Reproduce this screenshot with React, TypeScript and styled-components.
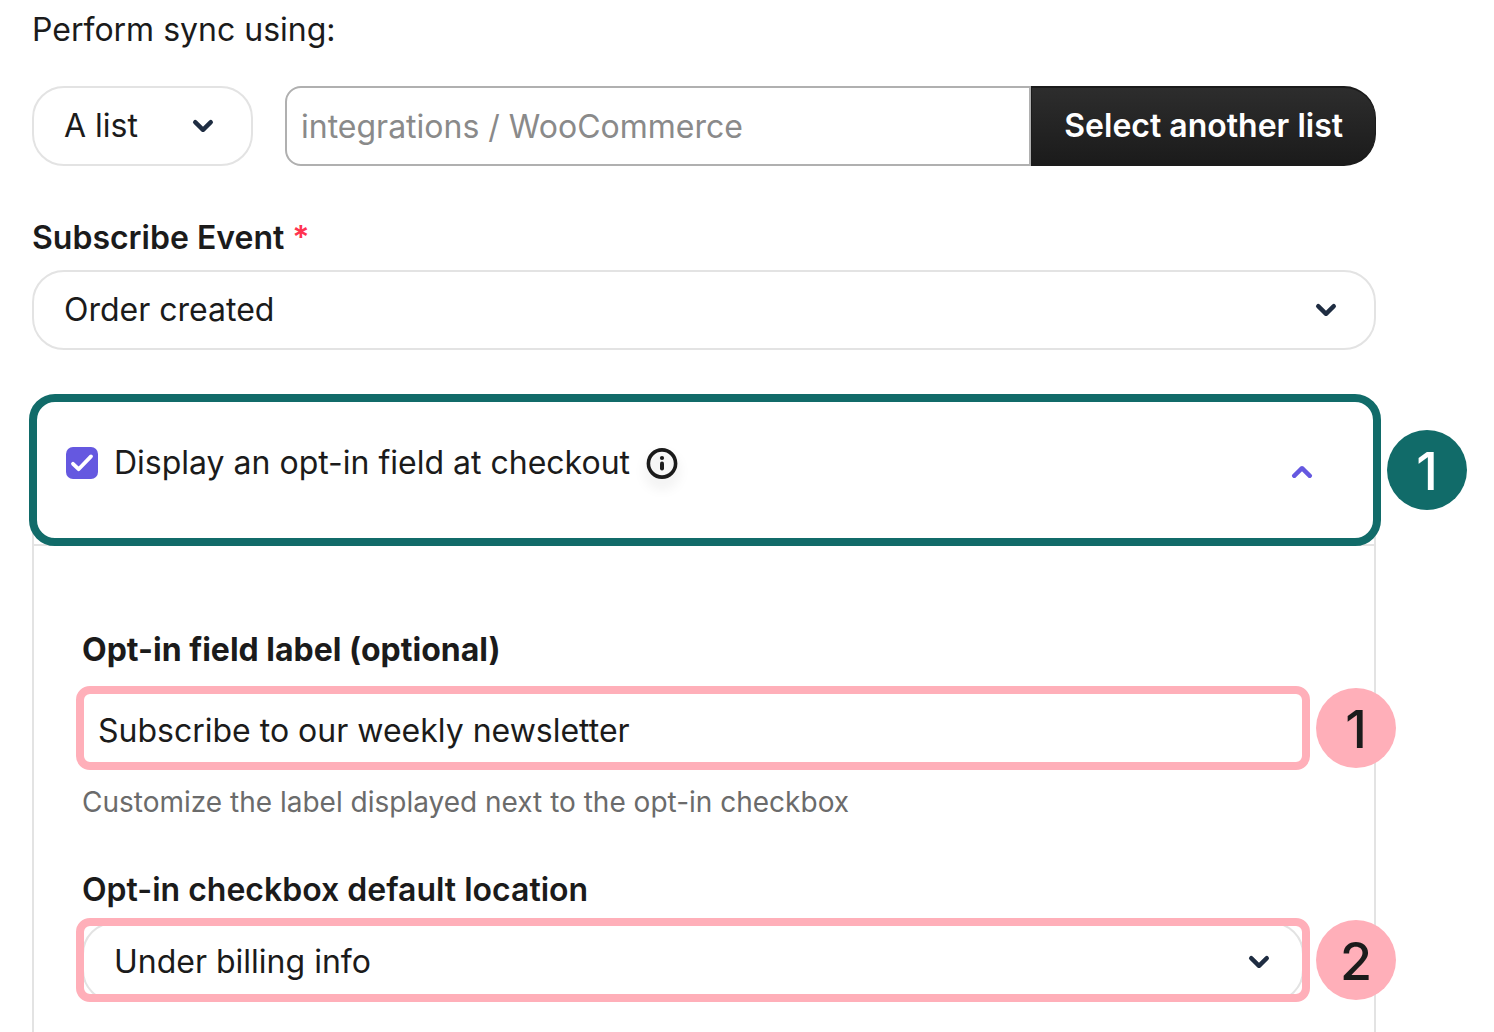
import React from "react";
import styled, { createGlobalStyle } from "styled-components";

const Global = createGlobalStyle`
  *, *::before, *::after { box-sizing: border-box; }
  body { margin: 0; background: #fff; color: #1b1b1b; overflow: hidden; }
  body, button, input, select { font-family: Inter, "Liberation Sans", sans-serif; }
`;

const Page = styled.main`
  padding: 10px 118px 0 32px;
  height: 100vh;
  overflow: hidden;
  font-size: 32px;
  line-height: 40px;
`;

const Intro = styled.p`
  margin: 0 0 36px;
`;

const SyncRow = styled.div`
  display: grid;
  grid-template-columns: 221px 1fr;
  gap: 32px;
`;

const SelectWrap = styled.div<{ $inset?: boolean }>`
  position: relative;
  margin: ${(p) => (p.$inset ? "-4px -2px -8px" : "0")};
`;

const Select = styled.select`
  display: block;
  appearance: none;
  width: 100%;
  height: 80px;
  padding: 0 30px 2px;
  border: 2px solid #e3e3e3;
  border-radius: 32px;
  background: #fff;
  color: #1b1b1b;
  font-size: 32px;
`;

const Chevron = styled.svg<{ $right: number }>`
  position: absolute;
  top: 50%;
  right: ${(p) => p.$right}px;
  transform: translateY(-50%);
  pointer-events: none;
`;

const ListPicker = styled.div`
  display: flex;
`;

const ListInput = styled.input`
  flex: 1;
  min-width: 0;
  height: 80px;
  padding: 0 14px;
  border: 2px solid #b0b0b0;
  border-radius: 16px 0 0 16px;
  color: #1b1b1b;
  font-size: 32px;
  &::placeholder { color: #8a8a8a; }
`;

const PickButton = styled.button`
  padding: 0 32px 2px;
  border: 2px solid #1b1b1b;
  border-width: 2px 1px;
  border-radius: 0 32px 32px 0;
  background: linear-gradient(#2d2d2d, #1b1b1b);
  color: #fff;
  font-size: 32px;
  font-weight: 600;
`;

const Label = styled.label<{ $strong?: boolean }>`
  display: block;
  font-weight: ${(p) => (p.$strong ? 700 : 600)};
`;

const EventField = styled.div`
  padding: 52px 0 44px;
  ${Label} { margin-bottom: 12px; }
`;

const Required = styled.span`
  color: #ff3350;
`;

const Panel = styled.section`
  min-height: 700px;
  border: 2px solid #e3e3e3;
  border-radius: 32px 32px 0 0;
`;

const PanelHead = styled.div`
  position: relative;
  display: flex;
  align-items: center;
  justify-content: space-between;
  height: 152px;
  margin: -2px -7px 0 -5px;
  padding: 0 59px 0 29px;
  border: 8px solid #116b69;
  border-radius: 26px;
  background: #fff;
`;

const OptIn = styled.div`
  display: flex;
  align-items: center;
  gap: 16px;
  padding-bottom: 14px;
`;

const CheckLabel = styled.label`
  display: flex;
  align-items: center;
  gap: 16px;
`;

const CheckBox = styled.span`
  position: relative;
  display: block;
  width: 32px;
  height: 32px;
`;

const Check = styled.input`
  display: block;
  appearance: none;
  width: 32px;
  height: 32px;
  margin: 0;
  border-radius: 7px;
  background: #6558e0;
`;

const CheckMark = styled.svg`
  position: absolute;
  inset: 0;
  pointer-events: none;
`;

const IconButton = styled.button<{ $shadow?: boolean }>`
  display: grid;
  place-items: center;
  padding: 0;
  border: 0;
  background: none;
  color: inherit;
  filter: ${(p) => (p.$shadow ? "drop-shadow(0 8px 6px rgba(0, 0, 0, 0.12))" : "none")};
`;

const PanelBody = styled.div`
  padding: 84px 64px 0 48px;
  border-top: 2px solid #e3e3e3;
  margin-top: -2px;
`;

const Field = styled.div`
  padding-bottom: 52px;
`;

const Marked = styled.div<{ $gap: number }>`
  position: relative;
  margin: ${(p) => p.$gap}px 0 0 -6px;
  border: 8px solid #ffafb9;
  border-radius: 14px;
`;

const Clip = styled.div`
  overflow: hidden;
  border-radius: 6px;
`;

const TextInput = styled.input`
  display: block;
  width: 100%;
  height: 68px;
  padding: 5px 14px 0;
  border: 0;
  border-radius: 14px;
  color: #1b1b1b;
  font-size: 32px;
`;

const Badge = styled.span<{ $green?: boolean }>`
  position: absolute;
  top: 50%;
  left: calc(100% + 14px);
  display: grid;
  place-items: center;
  width: 80px;
  height: 80px;
  padding-top: 4px;
  transform: translateY(-50%);
  border-radius: 50%;
  background: ${(p) => (p.$green ? "#116b69" : "#ffafb9")};
  color: ${(p) => (p.$green ? "#fff" : "#1b1b1b")};
  font-size: 52px;
  font-weight: 500;
`;

const Hint = styled.p`
  margin: 16px 0 0;
  color: #6b6b6b;
  font-size: 28px;
  line-height: 32px;
`;

const Down = ({ right = 38 }: { right?: number }) => (
  <Chevron $right={right} width="24" height="16" viewBox="0 0 24 16" fill="none" stroke="#1f2d42" strokeWidth="4.4" strokeLinecap="round" strokeLinejoin="round">
    <path d="M4.2 4.2l7.8 7.6 7.8-7.6" />
  </Chevron>
);

export default function App() {
  return (
    <Page>
      <Global />
      <Intro>Perform sync using:</Intro>
      <SyncRow>
        <SelectWrap>
          <Select aria-label="Sync type"><option>A list</option></Select>
          <Down />
        </SelectWrap>
        <ListPicker>
          <ListInput aria-label="List" placeholder="integrations / WooCommerce" />
          <PickButton type="button">Select another list</PickButton>
        </ListPicker>
      </SyncRow>
      <EventField>
        <Label htmlFor="event">Subscribe Event <Required>*</Required></Label>
        <SelectWrap>
          <Select id="event"><option>Order created</option></Select>
          <Down />
        </SelectWrap>
      </EventField>
      <Panel>
        <PanelHead>
          <OptIn>
            <CheckLabel>
              <CheckBox>
                <Check type="checkbox" defaultChecked />
                <CheckMark width="32" height="32" viewBox="0 0 32 32" fill="none" stroke="#fff" strokeWidth="3.8" strokeLinecap="round" strokeLinejoin="round">
                  <path d="M7 16.8l5.6 5.4L25 9.4" />
                </CheckMark>
              </CheckBox>
              Display an opt-in field at checkout
            </CheckLabel>
            <IconButton type="button" aria-label="More information" $shadow>
              <svg width="32" height="32" viewBox="0 0 32 32" fill="none" stroke="currentColor">
                <circle cx="16" cy="16.5" r="13.6" strokeWidth="3.6" />
                <path d="M16 16.4v5.2" strokeWidth="4" strokeLinecap="round" />
                <circle cx="16" cy="11" r="2.1" fill="currentColor" stroke="none" />
              </svg>
            </IconButton>
          </OptIn>
          <IconButton type="button" aria-label="Collapse">
            <svg width="24" height="16" viewBox="0 0 24 16" fill="none" stroke="#6558e0" strokeWidth="4.4" strokeLinecap="round" strokeLinejoin="round">
              <path d="M4.2 13.8l7.8-7.6 7.8 7.6" />
            </svg>
          </IconButton>
          <Badge $green>1</Badge>
        </PanelHead>
        <PanelBody>
          <Field>
            <Label htmlFor="optin" $strong>Opt-in field label (optional)</Label>
            <Marked $gap={16}>
              <TextInput id="optin" defaultValue="Subscribe to our weekly newsletter" />
              <Badge>1</Badge>
            </Marked>
            <Hint>Customize the label displayed next to the opt-in checkbox</Hint>
          </Field>
          <Field>
            <Label htmlFor="location">Opt-in checkbox default location</Label>
            <Marked $gap={8}>
              <Clip>
                <SelectWrap $inset>
                  <Select id="location"><option>Under billing info</option></Select>
                  <Down right={33} />
                </SelectWrap>
              </Clip>
              <Badge>2</Badge>
            </Marked>
          </Field>
        </PanelBody>
      </Panel>
    </Page>
  );
}
